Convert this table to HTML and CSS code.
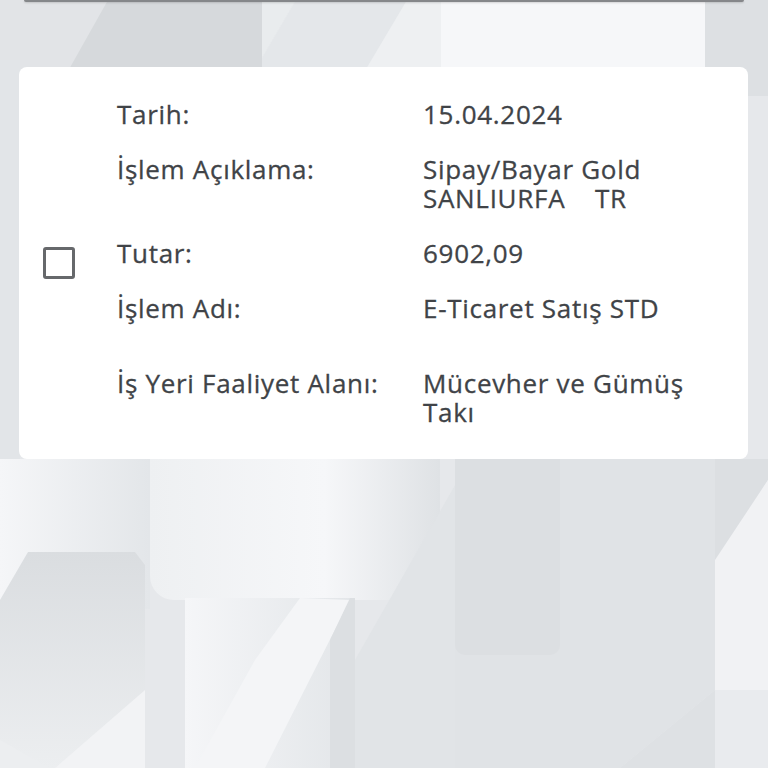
FILE: index.html
```html
<!DOCTYPE html>
<html lang="tr">
<head>
<meta charset="utf-8">
<title>İşlem Detayı</title>
<link rel="stylesheet" href="styles.css">
</head>
<body>
<svg class="bg" width="768" height="768" viewBox="0 0 768 768" aria-hidden="true">
  <defs>
    <linearGradient id="gA" x1="0" y1="0" x2="1" y2="0">
      <stop offset="0" stop-color="#f5f6f8"/>
      <stop offset="1" stop-color="#e3e6e9"/>
    </linearGradient>
    <linearGradient id="gC" x1="0" y1="0" x2="1" y2="0">
      <stop offset="0" stop-color="#eef0f2"/>
      <stop offset="0.6" stop-color="#f6f7f9"/>
      <stop offset="1" stop-color="#dfe2e5"/>
    </linearGradient>
    <linearGradient id="gD" x1="0" y1="0" x2="0" y2="1">
      <stop offset="0" stop-color="#dadde0"/>
      <stop offset="1" stop-color="#eceef0"/>
    </linearGradient>
  </defs>
  <rect width="768" height="768" fill="#e6e8eb"/>
  <rect x="0" y="0" width="768" height="70" fill="#e2e4e7"/>
  <polygon points="54,96 108,0 262,0 262,96" fill="#d6d9dc"/>
  <polygon points="262,0 296,0 262,58" fill="#e9ecee"/>
  <polygon points="262,58 296,0 441,0 441,96 262,96" fill="#eef0f2"/>
  <polygon points="296,0 407,0 350,96 262,96 262,58" fill="#e4e7ea"/>
  <rect x="441" y="0" width="264" height="96" fill="#f6f7f9"/>
  <rect x="705" y="0" width="63" height="96" fill="#dde0e3"/>
  <rect x="0" y="60" width="20" height="410" fill="#e2e5e8"/>
  <rect x="0" y="459" width="150" height="150" fill="url(#gA)"/>
  <rect x="150" y="420" width="290" height="180" rx="24" fill="url(#gC)"/>
  <polygon points="0,600 28,552 135,552 145,565 145,690 100,768 0,768" fill="url(#gD)"/>
  <polygon points="0,740 50,768 0,768" fill="#eceef0"/>
  <polygon points="145,690 145,768 55,768" fill="#f2f3f5"/>
  <rect x="185" y="598" width="165" height="170" fill="url(#gA)"/>
  <polygon points="350,600 265,768 195,768 255,660 300,598" fill="#f4f5f7"/>
  <polygon points="350,598 355,598 355,768 330,768 330,640" fill="#dcdfe2"/>
  <polygon points="470,459 355,660 355,768 455,768 455,459" fill="#e1e4e7"/>
  <polygon points="455,459 715,459 715,768 620,768 455,768" fill="#e0e3e6"/>
  <rect x="455" y="440" width="105" height="215" rx="10" fill="#dcdfe2"/>
  <polygon points="715,459 768,459 768,480 718,560 715,560" fill="#dcdfe2"/>
  <polygon points="768,480 768,690 715,690 715,560" fill="#f1f2f4"/>
  <polygon points="715,690 768,690 768,768 620,768" fill="#e9ebee"/>
  <polygon points="715,690 620,768 715,768" fill="#dee1e4"/>
</svg>

<main class="page">
  <div class="prev-edge"></div>
  <section class="card">
    <div class="check-col">
      <span class="checkbox" role="checkbox" aria-checked="false"></span>
    </div>
    <div class="details">
      <div class="row">
        <div class="label">Tarih:</div>
        <div class="value">15.04.2024</div>
      </div>
      <div class="row">
        <div class="label">İşlem Açıklama:</div>
        <div class="value">Sipay/Bayar Gold<br>SANLIURFA&nbsp;&nbsp;&nbsp;&nbsp;TR</div>
      </div>
      <div class="row">
        <div class="label">Tutar:</div>
        <div class="value">6902,09</div>
      </div>
      <div class="row">
        <div class="label">İşlem Adı:</div>
        <div class="value">E-Ticaret Satış STD</div>
      </div>
      <div class="row row-spaced">
        <div class="label">İş Yeri Faaliyet Alanı:</div>
        <div class="value">Mücevher ve Gümüş<br>Takı</div>
      </div>
    </div>
  </section>
</main>
</body>
</html>
```

FILE: styles.css
```css
html, body {
  margin: 0;
  padding: 0;
}

body {
  width: 768px;
  height: 768px;
  position: relative;
  overflow: hidden;
  background: #e6e8eb;
  font-family: "Open Sans", "Noto Sans", sans-serif;
  color: #404347;
}

.bg {
  position: absolute;
  left: 0;
  top: 0;
  z-index: 0;
}

.page {
  position: relative;
  z-index: 1;
  padding: 0 20px 0 19px;
}

.prev-edge {
  width: 720px;
  height: 2px;
  margin-left: 5px;
  background: #85878a;
  border-radius: 0 0 3px 3px;
  box-shadow: 0 1px 2px rgba(0, 0, 0, 0.15);
}

.card {
  margin-top: 65px;
  width: 729px;
  height: 392px;
  box-sizing: border-box;
  background: #ffffff;
  border-radius: 8px;
  display: flex;
  align-items: center;
  padding: 0 0 0 24px;
}

.check-col {
  width: 32px;
  flex: none;
  margin-right: 42px;
  display: flex;
}

.checkbox {
  width: 32px;
  height: 32px;
  box-sizing: border-box;
  border: 3px solid #66686b;
  border-radius: 3px;
  display: block;
}

.details {
  display: flex;
  flex-direction: column;
  gap: 26px;
  font-size: 26px;
  font-weight: 500;
  letter-spacing: 0.7px;
  line-height: 29px;
  -webkit-text-stroke: 0.3px currentColor;
}

.row {
  display: grid;
  grid-template-columns: 306px 1fr;
}

.row-spaced {
  margin-top: 20px;
}

.label,
.value {
  white-space: nowrap;
}
```
